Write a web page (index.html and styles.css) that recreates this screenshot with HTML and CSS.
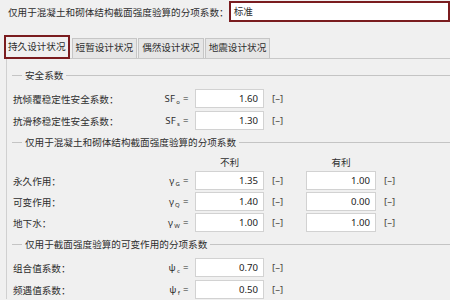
FILE: index.html
```html
<!DOCTYPE html>
<html lang="zh-CN">
<head>
    <meta charset="UTF-8">
    <title>分项系数</title>
    <link rel="stylesheet" href="styles.css">
</head>
<body>
    <div class="top-row">
        <span class="top-label">仅用于混凝土和砌体结构截面强度验算的分项系数：</span>
        <div class="select-box">标准</div>
    </div>

    <div class="tabs">
        <div class="tab active">持久设计状况</div>
        <div class="tab">短暂设计状况</div>
        <div class="tab">偶然设计状况</div>
        <div class="tab">地震设计状况</div>
    </div>

    <div class="panel">
        <div class="legend first">安全系数</div>
        <div class="row gap-lg">
            <span class="label">抗倾覆稳定性安全系数：</span>
            <span class="sym">SF<sub>o</sub></span>
            <span class="eq">=</span>
            <span class="field">1.60</span>
            <span class="unit">[–]</span>
        </div>
        <div class="row">
            <span class="label">抗滑移稳定性安全系数：</span>
            <span class="sym">SF<sub>s</sub></span>
            <span class="eq">=</span>
            <span class="field">1.30</span>
            <span class="unit">[–]</span>
        </div>

        <div class="legend mid">仅用于混凝土和砌体结构截面强度验算的分项系数</div>
        <div class="row head">
            <span class="label"></span>
            <span class="sym"></span>
            <span class="eq"></span>
            <span class="col-head">不利</span>
            <span class="unit"></span>
            <span class="col-head">有利</span>
        </div>
        <div class="row gap-sm">
            <span class="label">永久作用：</span>
            <span class="sym">γ<sub>G</sub></span>
            <span class="eq">=</span>
            <span class="field">1.35</span>
            <span class="unit">[–]</span>
            <span class="field">1.00</span>
            <span class="unit">[–]</span>
        </div>
        <div class="row gap-sm">
            <span class="label">可变作用：</span>
            <span class="sym">γ<sub>Q</sub></span>
            <span class="eq">=</span>
            <span class="field">1.40</span>
            <span class="unit">[–]</span>
            <span class="field">0.00</span>
            <span class="unit">[–]</span>
        </div>
        <div class="row gap-sm">
            <span class="label">地下水：</span>
            <span class="sym">γ<sub>W</sub></span>
            <span class="eq">=</span>
            <span class="field">1.00</span>
            <span class="unit">[–]</span>
            <span class="field">1.00</span>
            <span class="unit">[–]</span>
        </div>

        <div class="legend mid">仅用于截面强度验算的可变作用的分项系数</div>
        <div class="row gap-lg">
            <span class="label">组合值系数：</span>
            <span class="sym">ψ<sub>c</sub></span>
            <span class="eq">=</span>
            <span class="field">0.70</span>
            <span class="unit">[–]</span>
        </div>
        <div class="row">
            <span class="label">频遇值系数：</span>
            <span class="sym">ψ<sub>f</sub></span>
            <span class="eq">=</span>
            <span class="field">0.50</span>
            <span class="unit">[–]</span>
        </div>
    </div>
</body>
</html>
```

FILE: styles.css
```css
body {
    margin: 0;
    background-color: #f0f0f0;
    color: #2e2e2e;
    font-family: "Noto Sans", "Noto Sans CJK SC", sans-serif;
    font-size: 9.6px;
    overflow: hidden;
}

.top-row {
    display: flex;
    align-items: center;
    height: 24px;
    white-space: nowrap;
}

.top-label {
    padding-left: 8px;
    width: 223px;
}

.select-box {
    box-sizing: border-box;
    height: 21px;
    width: 240px;
    margin-top: -1px;
    padding-left: 3px;
    line-height: 17px;
    background-color: #fff;
    border: 2px solid #7a1c1f;
}

.tabs {
    display: flex;
    align-items: flex-end;
    height: 24px;
    margin-top: 11px;
    padding-left: 4px;
    position: relative;
    z-index: 1;
}

.tab {
    box-sizing: border-box;
    height: 20px;
    line-height: 18px;
    padding: 0 3px;
    margin-left: 1px;
    margin-bottom: 1px;
    white-space: nowrap;
    background-color: #e6e6e6;
    border: 1px solid #c6c6c6;
    border-bottom: none;
}

.tab.active {
    height: 24px;
    line-height: 20px;
    margin-left: 0;
    margin-right: 1px;
    margin-bottom: 0;
    padding: 0 2px;
    background-color: #f0f0f0;
    border: 2px solid #7a1c1f;
}

.panel {
    margin-top: -1px;
    margin-left: 6px;
    padding: 9px 0 0 6px;
    border-top: 1px solid #c8c8c8;
    border-left: 1px solid #d0d0d0;
    white-space: nowrap;
}

.legend {
    display: flex;
    align-items: center;
    height: 14px;
    margin-left: -1px;
}

.legend::before {
    content: "";
    width: 10px;
    margin-right: 3px;
    border-top: 1px solid #c4c4c4;
}

.legend::after {
    content: "";
    flex: 1;
    margin-left: 3px;
    border-top: 1px solid #c4c4c4;
}

.legend.mid {
    margin-top: 5px;
}

.row {
    display: grid;
    grid-template-columns: 147px 20px 15px 69px 42px 70px 30px;
    align-items: center;
    height: 19px;
    margin-top: 3px;
}

.row.gap-lg {
    margin-top: 7px;
}

.row.gap-sm {
    margin-top: 2px;
}

.row.head {
    height: 14px;
    margin-top: 6px;
}

.sym {
    text-align: right;
    letter-spacing: 0.2px;
}

.sym sub {
    font-size: 6px;
    vertical-align: -2px;
    margin-left: 1px;
}

.eq {
    padding-left: 3px;
}

.field {
    box-sizing: border-box;
    height: 19px;
    line-height: 17px;
    padding-right: 5px;
    text-align: right;
    color: #222;
    background-color: #fff;
    border: 1px solid #d2d2d2;
}

.unit {
    padding-left: 8px;
    color: #4a4440;
}

.col-head {
    text-align: center;
}
```
